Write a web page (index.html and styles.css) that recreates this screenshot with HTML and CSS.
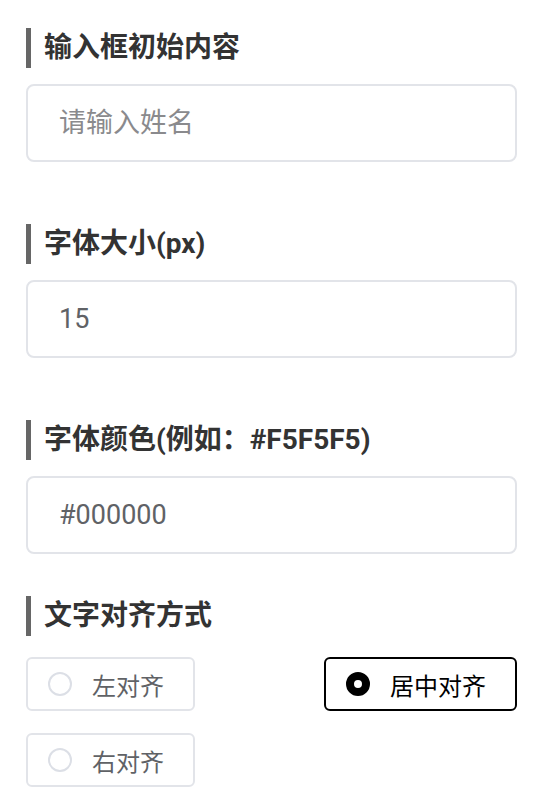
FILE: index.html
```html
<!DOCTYPE html>
<html lang="zh-CN">
<head>
    <meta charset="utf-8">
    <title>文本设置</title>
    <meta name="viewport" content="width=device-width, initial-scale=1">
    <link rel="stylesheet" href="styles.css">
</head>
<body>
    <div class="panel">
        <div class="field">
            <h2 class="field-title">输入框初始内容</h2>
            <input class="text-input" type="text" placeholder="请输入姓名">
        </div>

        <div class="field">
            <h2 class="field-title">字体大小(px)</h2>
            <input class="text-input" type="text" value="15">
        </div>

        <div class="field compact">
            <h2 class="field-title">字体颜色(例如：#F5F5F5)</h2>
            <input class="text-input" type="text" value="#000000">
        </div>

        <div class="field">
            <h2 class="field-title">文字对齐方式</h2>
            <div class="radio-group">
                <label class="radio">
                    <input type="radio" name="align" value="left">
                    <span class="radio-dot"></span>
                    <span class="radio-text">左对齐</span>
                </label>
                <label class="radio checked">
                    <input type="radio" name="align" value="center" checked>
                    <span class="radio-dot"></span>
                    <span class="radio-text">居中对齐</span>
                </label>
                <label class="radio">
                    <input type="radio" name="align" value="right">
                    <span class="radio-dot"></span>
                    <span class="radio-text">右对齐</span>
                </label>
            </div>
        </div>
    </div>
</body>
</html>
```

FILE: styles.css
```css
body {
    margin: 0;
    background-color: #ffffff;
    font-family: Roboto, "Noto Sans CJK SC", sans-serif;
    color: #333333;
}
.panel {
    padding: 28px 29px 0 26px;
}
.field {
    margin-bottom: 62px;
}
.field.compact {
    margin-bottom: 42px;
}
.field-title {
    margin: 0 0 16px 0;
    padding-left: 13px;
    border-left: 5px solid #666666;
    height: 40px;
    line-height: 40px;
    font-size: 28px;
    font-weight: bold;
    color: #333333;
}
.text-input {
    display: block;
    box-sizing: border-box;
    width: 100%;
    height: 78px;
    margin: 0;
    padding: 0 31px;
    border: 2px solid #e2e4e9;
    border-radius: 8px;
    outline: none;
    font-family: Roboto, "Noto Sans CJK SC", sans-serif;
    font-size: 27px;
    color: #606266;
    background-color: #ffffff;
}
.text-input::placeholder {
    color: #8a8a8d;
}
.radio-group {
    display: flex;
    flex-wrap: wrap;
    justify-content: space-between;
    row-gap: 22px;
    padding-top: 5px;
}
.radio {
    display: flex;
    align-items: center;
    gap: 20px;
    box-sizing: border-box;
    height: 54px;
    padding: 0 29px 0 20px;
    border: 2px solid #e2e4e9;
    border-radius: 6px;
    font-size: 24px;
    color: #606266;
}
.radio input {
    display: none;
}
.radio-dot {
    box-sizing: border-box;
    width: 24px;
    height: 24px;
    border: 2px solid #dcdfe6;
    border-radius: 50%;
    background-color: #ffffff;
}
.radio.checked {
    border-color: #000000;
    color: #000000;
}
.radio.checked .radio-dot {
    border: 8px solid #000000;
    background-color: #ffffff;
}
```
